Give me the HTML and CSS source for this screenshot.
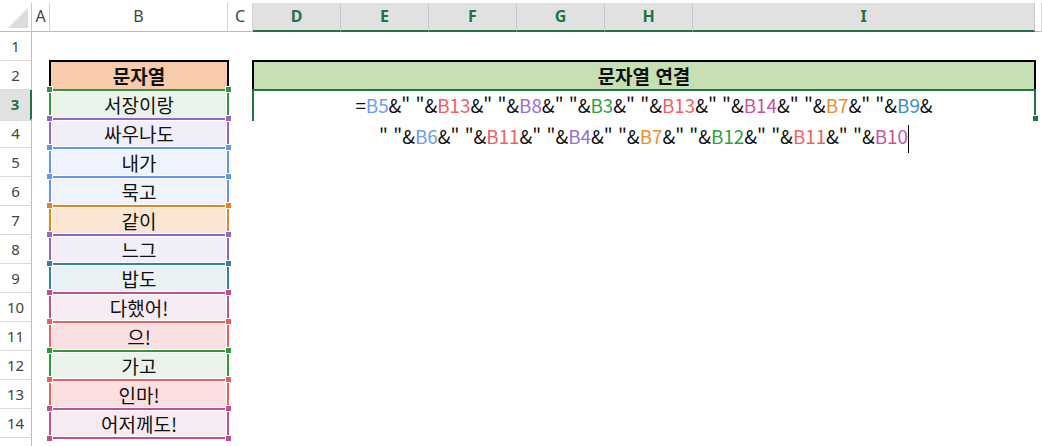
FILE: index.html
```html
<!DOCTYPE html>
<html lang="ko">
<head>
  <meta charset="UTF-8">
  <title>문자열 연결</title>
  <link rel="stylesheet" href="styles.css">
</head>
<body>
  <div id="sheet">
    <div class="row headrow">
      <div class="corner">
        <svg width="31" height="29" viewBox="0 0 31 29"><polygon points="28,5 28,25 8,25" fill="#dcdcdc"/></svg>
      </div>
      <div class="colhead">A</div>
      <div class="colhead">B</div>
      <div class="colhead">C</div>
      <div class="colhead sel">D</div>
      <div class="colhead sel">E</div>
      <div class="colhead sel">F</div>
      <div class="colhead sel">G</div>
      <div class="colhead sel">H</div>
      <div class="colhead sel">I</div>
      <div class="colhead"></div>
    </div>

    <div class="row">
      <div class="rowhead">1</div>
    </div>

    <div class="row">
      <div class="rowhead">2</div>
      <div></div>
      <div class="title-b">문자열</div>
      <div></div>
      <div class="title-d">문자열 연결</div>
    </div>

    <div class="row">
      <div class="rowhead sel">3</div>
      <div></div>
      <div class="ref g"><span class="h tl"></span><span class="h tr"></span>서장이랑</div>
      <div></div>
      <div class="active">
        <div class="editor">=<span class="cb">B5</span>&amp;" "&amp;<span class="cr">B13</span>&amp;" "&amp;<span class="cp">B8</span>&amp;" "&amp;<span class="cg">B3</span>&amp;" "&amp;<span class="cr">B13</span>&amp;" "&amp;<span class="cm">B14</span>&amp;" "&amp;<span class="co">B7</span>&amp;" "&amp;<span class="ct">B9</span>&amp;<br>" "&amp;<span class="cb">B6</span>&amp;" "&amp;<span class="cr">B11</span>&amp;" "&amp;<span class="cp">B4</span>&amp;" "&amp;<span class="co">B7</span>&amp;" "&amp;<span class="cg">B12</span>&amp;" "&amp;<span class="cr">B11</span>&amp;" "&amp;<span class="cm">B10</span><span class="caret"></span></div>
        <span class="fill-handle"></span>
      </div>
    </div>

    <div class="row">
      <div class="rowhead">4</div>
      <div></div>
      <div class="ref p"><span class="h tl"></span><span class="h tr"></span>싸우나도</div>
    </div>
    <div class="row">
      <div class="rowhead">5</div>
      <div></div>
      <div class="ref b"><span class="h tl"></span><span class="h tr"></span>내가</div>
    </div>
    <div class="row">
      <div class="rowhead">6</div>
      <div></div>
      <div class="ref b"><span class="h tl"></span><span class="h tr"></span>묵고</div>
    </div>
    <div class="row">
      <div class="rowhead">7</div>
      <div></div>
      <div class="ref o"><span class="h tl"></span><span class="h tr"></span>같이</div>
    </div>
    <div class="row">
      <div class="rowhead">8</div>
      <div></div>
      <div class="ref p"><span class="h tl"></span><span class="h tr"></span>느그</div>
    </div>
    <div class="row">
      <div class="rowhead">9</div>
      <div></div>
      <div class="ref t"><span class="h tl"></span><span class="h tr"></span>밥도</div>
    </div>
    <div class="row">
      <div class="rowhead">10</div>
      <div></div>
      <div class="ref m"><span class="h tl"></span><span class="h tr"></span>다했어!</div>
    </div>
    <div class="row">
      <div class="rowhead">11</div>
      <div></div>
      <div class="ref r"><span class="h tl"></span><span class="h tr"></span>으!</div>
    </div>
    <div class="row">
      <div class="rowhead">12</div>
      <div></div>
      <div class="ref g"><span class="h tl"></span><span class="h tr"></span>가고</div>
    </div>
    <div class="row">
      <div class="rowhead">13</div>
      <div></div>
      <div class="ref r"><span class="h tl"></span><span class="h tr"></span>인마!</div>
    </div>
    <div class="row">
      <div class="rowhead">14</div>
      <div></div>
      <div class="ref m"><span class="h tl"></span><span class="h tr"></span><span class="h bl"></span><span class="h br"></span>어저께도!</div>
    </div>
    <div class="row">
      <div class="rowhead"></div>
    </div>
  </div>
</body>
</html>
```

FILE: styles.css
```css
body {
  margin: 0;
  background: #fff;
  font-family: "Noto Sans CJK KR", "Noto Sans", sans-serif;
  overflow: hidden;
}
#sheet {
  width: 1042px;
}
.row {
  display: grid;
  grid-template-columns: 32px 18px 178px 25px 88px 88px 88px 88px 88px 342px 1fr;
  height: 29px;
}

/* headers */
.headrow {
  height: 32px;
  align-items: end;
}
.corner {
  height: 29px;
  border-right: 1px solid #c6c6c6;
  border-bottom: 1px solid #bdbdbd;
  box-sizing: border-box;
}
.corner svg {
  display: block;
}
.colhead {
  height: 29px;
  box-sizing: border-box;
  border-right: 1px solid #d4d4d4;
  border-bottom: 1px solid #bdbdbd;
  font-family: "Noto Sans", sans-serif;
  font-size: 16px;
  line-height: 27px;
  text-align: center;
  color: #444;
}
.colhead.sel {
  background: #e1e1e1;
  border-right-color: #c8c8c8;
  border-bottom: 2px solid #217346;
  color: #217346;
  font-weight: bold;
}
.rowhead {
  box-sizing: border-box;
  border-right: 1px solid #bdbdbd;
  border-bottom: 1px solid #dadada;
  font-family: "Noto Sans", sans-serif;
  font-size: 15px;
  line-height: 28px;
  text-align: center;
  color: #444;
}
.rowhead.sel {
  background: #e1e1e1;
  border-right: 2px solid #217346;
  color: #217346;
  font-weight: bold;
}

/* cells */
.title-b,
.title-d {
  margin: -1px -1px -1px -1px;
  border: 2px solid #000;
  font-size: 19px;
  font-weight: bold;
  line-height: 27px;
  text-align: center;
  color: #111;
}
.title-b {
  background: #f8cbad;
}
.title-d {
  grid-column: span 6;
  background: #c6e0b4;
}

.ref {
  position: relative;
  margin: -1px -1px -1px -1px;
  border: 2px solid var(--c);
  background: var(--f);
  box-shadow: inset 0 0 0 1px #fff;
  font-size: 19px;
  line-height: 27px;
  text-align: center;
  color: #111;
}
.h {
  position: absolute;
  width: 5px;
  height: 5px;
  background: var(--c);
  box-shadow: 0 0 0 1px #fff;
}
.tl { left: -4px; top: -4px; }
.tr { right: -4px; top: -4px; }
.bl { left: -4px; bottom: -4px; }
.br { right: -4px; bottom: -4px; }

.g { --c: #31963f; --f: #e9f3ea; }
.p { --c: #9466c9; --f: #f1eef9; }
.b { --c: #6595ee; --f: #eef3fd; }
.o { --c: #e3842c; --f: #fae6d3; }
.t { --c: #38809f; --f: #e9f1f4; }
.m { --c: #c2508f; --f: #f7ebf3; }
.r { --c: #ea5f5f; --f: #fcdfe0; }

/* active cell in edit mode */
.active {
  grid-column: span 6;
  position: relative;
  align-self: start;
  height: 32px;
  margin: -1px -1px 0 -1px;
  border: 2px solid #217346;
  border-bottom: none;
  box-sizing: border-box;
}
.fill-handle {
  position: absolute;
  right: -4px;
  bottom: 0;
  width: 5px;
  height: 5px;
  background: #217346;
  box-shadow: 0 0 0 1px #fff;
}
.editor {
  position: absolute;
  top: -2px;
  left: 0;
  right: 0;
  z-index: 2;
  font-size: 18.8px;
  line-height: 31px;
  text-align: center;
  color: #111;
  white-space: nowrap;
}
.caret {
  display: inline-block;
  width: 0;
  height: 28px;
  border-left: 1px solid #000;
  vertical-align: middle;
}
.cg { color: #2fa043; }
.cp { color: #9b6fd6; }
.cb { color: #6a9cf5; }
.co { color: #f28b2f; }
.ct { color: #3d8eb9; }
.cm { color: #c9529c; }
.cr { color: #f25e66; }
```
